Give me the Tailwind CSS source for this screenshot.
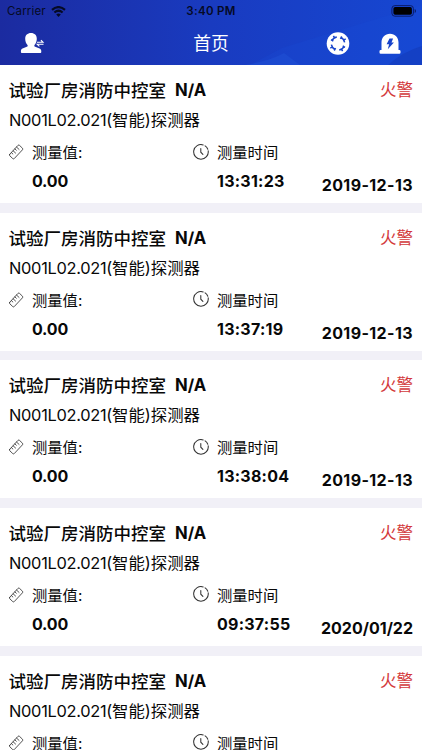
<!DOCTYPE html>
<html lang="zh-CN">
<head>
<meta charset="utf-8">
<title>首页</title>
<script src="https://cdn.jsdelivr.net/npm/@tailwindcss/browser@4"></script>
</head>
<body class="w-[422px] h-[750px] overflow-hidden bg-[#f1f0f7] text-[#080808] font-['Inter','Noto_Sans_CJK_SC',sans-serif]">
<svg class="hidden">
  <symbol id="ruler" viewBox="0 0 16 16"><g fill="none" stroke="#333" stroke-width=".9" stroke-linejoin="round" stroke-linecap="round"><path d="M.8 10.400 9.600.9Q10.400.2 11.200.9L14.400 4Q15.100 4.800 14.400 5.600L5.600 15Q4.800 15.700 4 15L.8 12Q0 11.200.8 10.400Z"/><path d="m2.600 8.700 1.500 1.400M4.400 6.700l2.600 2.400M6.300 4.700l1.500 1.400M8.100 2.800l2.600 2.400"/></g></symbol>
  <symbol id="clock" viewBox="0 0 16 16"><g fill="none" stroke="#333" stroke-width="1.050" stroke-linecap="round"><path d="M10.200.9A7.300 7.300 0 1 0 15.200 6.800M12.100 1.900A7.300 7.300 0 0 1 14.800 5.200"/><path d="M7.800 4.600V8.200L9.900 10.400"/></g></symbol>
</svg>
<header class="relative h-[65px] flex flex-col bg-linear-to-r from-[#1b2ba0] via-[#193bc0] to-[#1647d2]">
  <svg class="absolute inset-0" width="422" height="65"><path d="M282 48 422 5V65H250Z" fill="#1b4fdb" opacity=".2"/><path d="M245 65Q270 61 284 53L300 65Z" fill="#2863e5" opacity=".25"/><path d="M388 65Q402 52 422 46V65Z" fill="#1238b5" opacity=".5"/></svg>
  <div class="relative h-[22px] grid grid-cols-3 items-center text-[#050a25]">
    <div class="flex items-center pl-[7px] gap-[5px]"><span class="text-[11.500px] leading-[22px] tracking-[.15px]">Carrier</span>
      <svg width="15" height="11" viewBox="0 0 15 11"><g fill="none" stroke="#050a25" stroke-width="2.200"><path d="M1 3.900Q7.500-1.700 14 3.900"/><path d="M3.400 6.500Q7.500 3 11.600 6.500"/></g><path d="M5.200 8.400Q7.500 6.500 9.800 8.400L7.500 10.900Z" fill="#050a25"/></svg>
    </div>
    <div class="text-center text-[11.500px] font-semibold leading-[22px] tracking-[.3px]">3:40 PM</div>
    <div class="flex justify-end pr-[5px]"><svg width="26" height="12" viewBox="0 0 26 12"><rect x=".9" y=".6" width="21.500" height="10.600" rx="3" fill="none" stroke="#0a1c68" stroke-width="1"/><rect x="2.400" y="2.100" width="18.500" height="7.600" rx="1.700" fill="#000"/><path d="M23.700 4V8Q25 7.500 25 6T23.700 4Z" fill="#0a1c68"/></svg></div>
  </div>
  <div class="relative h-[43px] grid grid-cols-3 items-center text-white">
    <div class="pl-[20px]"><svg width="25" height="22" viewBox="0 0 25 22"><path d="M11 .1C7.500.1 5.200 2.300 5.200 5.700c0 2.500.8 4.800 2.300 6.200.4.900.2 1.500-.7 1.900L2.500 15.600C1.200 16.300.9 17.300.9 18.500c0 1 .4 1.500 1.300 1.500H20c1 0 1.300-.5 1.300-1.500 0-1.200-.4-2.200-1.700-2.900L15.200 13.800c-.9-.4-1.100-1-.7-1.900 1.500-1.400 2.300-3.700 2.300-6.200C16.800 2.300 14.500.1 11 .1Z" fill="#fff"/><g fill="none" stroke="#fff" stroke-width="1.100"><path d="M17 9.300H23L20.900 7.200M23.500 11.300H17.200L19.400 13.400"/></g></svg></div>
    <div class="text-center text-[17.800px] leading-[41px]">首页</div>
    <div class="flex items-center justify-end pr-[21px] gap-[29px]">
      <svg width="24" height="24" viewBox="0 0 24 24"><circle cx="12" cy="11.500" r="11.300" fill="#fff"/><g fill="none" stroke="#1743ca" stroke-width="1.500"><g id="arc"><path d="M10.800 4.900A6.700 6.700 0 0 0 5.800 9M7.400 3.800l1.400 2.500M5 7.700l2.300 1.400"/></g><use href="#arc" transform="rotate(90 12 11.500)"/><use href="#arc" transform="rotate(180 12 11.500)"/><use href="#arc" transform="rotate(270 12 11.500)"/></g></svg>
      <svg width="22" height="22" viewBox="0 0 22 22"><path d="M2.500 17V9.500C2.500 4.300 6 .7 11 .7s8.500 3.600 8.500 8.800V17h.8q1.200 0 1.200 1.200v1.400q0 1.200-1.200 1.200H1.700Q.5 20.800.5 19.600v-1.400Q.5 17 1.700 17Z" fill="#fff"/><path d="M10.500 5.500h3.600l-1.600 3.900h2.400L8.800 16.300l1.300-5H7.600Z" fill="#1743ca"/></svg>
    </div>
  </div>
</header>
<main id="list" class="flex flex-col gap-[9.670px]"></main>
<template id="card">
  <article class="h-[138px] shrink-0 bg-white pl-[9px] pr-[9px]">
    <div class="flex justify-between h-[41px] pt-[12px]">
      <h2 class="flex gap-[9px] text-[17.500px] leading-[28px] font-medium"><span class="-ml-[.5px]">试验厂房消防中控室</span><span class="text-[16.700px] leading-[27px] font-bold">N/A</span></h2>
      <span class="text-[16.500px] leading-[27px] text-[#d3393b]">火警</span>
    </div>
    <p class="h-[33px] text-[16.400px] leading-[28px] whitespace-nowrap"><span class="tracking-[-.3px]">N001L02.021(</span>智能)探测器</p>
    <div class="grid grid-cols-[184px_122px_1fr]">
      <div class="flex gap-[8px]"><svg class="mt-[5px]" width="15" height="16"><use href="#ruler"/></svg><div><div class="text-[15.300px] leading-[28px]">测量值:</div><div class="text-[16px] leading-[28px] font-bold tracking-[-.2px]">0.00</div></div></div>
      <div class="flex gap-[8px]"><svg class="mt-[4.500px]" width="16" height="16"><use href="#clock"/></svg><div><div class="text-[15.300px] leading-[28px]">测量时间</div><div data-time class="text-[16px] leading-[28px] font-bold tracking-[.25px]"></div></div></div>
      <div data-date class="self-end justify-self-end whitespace-nowrap text-[16px] leading-[20px] font-bold"></div>
    </div>
  </article>
</template>
<script>
for (const [time, date] of [["13:31:23","2019-12-13"],["13:37:19","2019-12-13"],["13:38:04","2019-12-13"],["09:37:55","2020/01/22"],["09:37:55","2020/01/22"]]) {
  const card = document.getElementById("card").content.cloneNode(true);
  card.querySelector("[data-time]").textContent = time;
  const dateEl = card.querySelector("[data-date]");
  dateEl.textContent = date;
  if (date.includes("-")) dateEl.classList.add("tracking-[.4px]");
  document.getElementById("list").append(card);
}
</script>
</body>
</html>
